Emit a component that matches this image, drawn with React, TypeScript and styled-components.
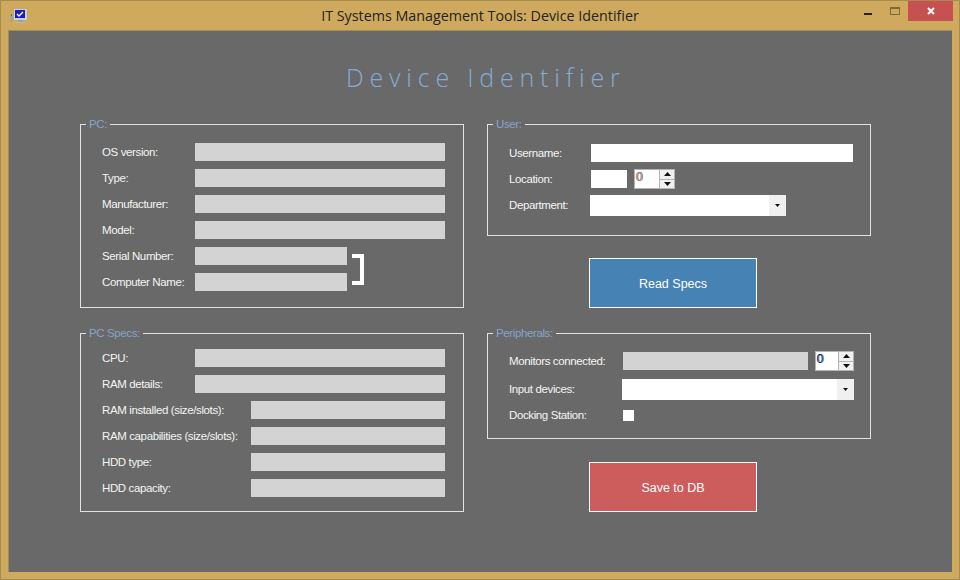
import React from "react";
import styled, { createGlobalStyle } from "styled-components";

const GlobalStyle = createGlobalStyle`
	html, body {
		margin: 0;
		padding: 0;
		background: #cfaa5e;
	}
	* {
		box-sizing: border-box;
	}
`;

const Window = styled.div`
	width: 960px;
	height: 580px;
	display: flex;
	flex-direction: column;
	overflow: hidden;
	border: 1px solid #a48c52;
	background: #cfaa5e;
	font-family: "Open Sans", "Liberation Sans", sans-serif;
`;

const TitleBar = styled.header`
	height: 29px;
	flex: none;
	display: grid;
	grid-template-columns: 1fr auto 1fr;
	align-items: start;
`;

const AppIcon = styled.svg`
	margin: 8px 0 0 9px;
	display: block;
`;

const WindowTitle = styled.div`
	padding-top: 5px;
	font-size: 14.3px;
	line-height: 20px;
	color: #222;
`;

const WindowButtons = styled.div`
	justify-self: end;
	display: flex;
	margin-right: 6px;
`;

const WindowButton = styled.div<{ $close?: boolean }>`
	width: ${p => (p.$close ? "45px" : "27px")};
	height: 20px;
	display: flex;
	align-items: center;
	justify-content: center;
	background: ${p => (p.$close ? "#c75050" : "transparent")};
`;

const MinimizeGlyph = styled.svg`
	align-self: flex-end;
	margin-bottom: 6px;
`;

const Content = styled.main`
	flex: 1;
	margin: 0 7px 7px;
	background: #696969;
	border: 1px solid #a48c52;
	border-width: 1px 0 0 1px;
	padding: 29px 80px 0 71px;
`;

const Heading = styled.h1`
	margin: 0 0 30px;
	padding-left: 266px;
	font-family: "Open Sans", "Liberation Sans", sans-serif;
	font-size: 25px;
	font-weight: 300;
	line-height: 34px;
	letter-spacing: 5.8px;
	color: #86a9d6;
`;

const Columns = styled.div`
	display: grid;
	grid-template-columns: 384px 384px;
	column-gap: 23px;
`;

const Column = styled.div`
	display: flex;
	flex-direction: column;
	align-items: flex-start;
`;

const Group = styled.section<{ $height: number; $top?: number; $below?: number }>`
	position: relative;
	width: 100%;
	height: ${p => p.$height}px;
	margin-bottom: ${p => p.$below ?? 0}px;
	padding: ${p => p.$top ?? 18}px 0 0 21px;
	border: 1px solid #e2e2e2;
	display: flex;
	flex-direction: column;
	gap: 8px;
`;

const Legend = styled.span`
	position: absolute;
	top: -8px;
	left: 5px;
	padding: 0 3px;
	background: #696969;
	font-family: "Liberation Sans", Arial, sans-serif;
	font-size: 11.5px;
	letter-spacing: -0.38px;
	line-height: 15px;
	color: #86a4cb;
`;

const Row = styled.div<{ $h?: number; $above?: number }>`
	display: flex;
	align-items: center;
	height: ${p => p.$h ?? 18}px;
	margin-top: ${p => p.$above ?? 0}px;
`;

const Label = styled.label<{ $w: number }>`
	width: ${p => p.$w}px;
	flex: none;
	font-family: "Liberation Sans", Arial, sans-serif;
	font-size: 11.5px;
	letter-spacing: -0.38px;
	line-height: 15px;
	color: #f4f4f4;
	white-space: nowrap;
`;

const Field = styled.div<{ $w: number; $white?: boolean }>`
	width: ${p => p.$w}px;
	height: 18px;
	flex: none;
	background: ${p => (p.$white ? "#fff" : "#d3d3d3")};
`;

const PairWrap = styled.div`
	display: flex;
	align-items: center;
`;

const PairRows = styled.div`
	display: flex;
	flex-direction: column;
	gap: 8px;
`;

const Bracket = styled.div`
	width: 12px;
	height: 31px;
	margin-left: 5px;
	border: solid #fff;
	border-width: 4px 4px 4px 0;
`;

const Spinner = styled.div<{ $w: number; $gap: number; $fringe: string }>`
	width: ${p => p.$w}px;
	height: 20px;
	margin-left: ${p => p.$gap}px;
	flex: none;
	display: flex;
	justify-content: space-between;
	background: #fff;
	border: 1px solid #b4b4b4;
	font-family: "Liberation Sans", Arial, sans-serif;
	font-size: 12px;
	line-height: 15px;
	padding-left: 1px;
	color: transparent;
	text-shadow: -0.4px 0 ${p => p.$fringe}, 0.4px 0 #1f6fd0;
`;

const SpinButtons = styled.div`
	width: 15px;
	flex: none;
	display: flex;
	flex-direction: column;
	gap: 1px;
	background: #b4b4b4;
	border-left: 1px solid #b4b4b4;
`;

const SpinButton = styled.div`
	flex: 1;
	display: flex;
	align-items: center;
	justify-content: center;
	background: #f0f0f0;
`;

const Combo = styled.div<{ $w: number }>`
	width: ${p => p.$w}px;
	height: 21px;
	flex: none;
	margin-left: -1px;
	display: flex;
	justify-content: flex-end;
	background: #fff;
`;

const ComboArrow = styled.div`
	width: 17px;
	display: flex;
	align-items: center;
	justify-content: center;
	background: #f0f0f0;
`;

const Check = styled.div`
	width: 11px;
	height: 11px;
	flex: none;
	background: #fff;
`;

const ActionButton = styled.button<{ $bg: string; $below?: number }>`
	width: 168px;
	height: 50px;
	flex: none;
	margin-left: 102px;
	margin-bottom: ${p => p.$below ?? 0}px;
	padding: 2px 0 0;
	border: 1px solid #fff;
	background: ${p => p.$bg};
	font-family: "Liberation Sans", Arial, sans-serif;
	font-size: 12.5px;
	color: #fff;
`;

function Arrow({ up, size = 7 }: { up?: boolean; size?: number }) {
	const h = Math.ceil(size / 2);
	return (
		<svg width={size} height={h} viewBox={`0 0 ${size} ${h}`}>
			<path d={up ? `M${size / 2} 0L${size} ${h}H0z` : `M0 0H${size}L${size / 2} ${h}z`} fill="#111" />
		</svg>
	);
}

function Spin({ w, gap, fringe }: { w: number; gap: number; fringe: string }) {
	return (
		<Spinner $w={w} $gap={gap} $fringe={fringe}>
			0
			<SpinButtons>
				<SpinButton><Arrow up /></SpinButton>
				<SpinButton><Arrow /></SpinButton>
			</SpinButtons>
		</Spinner>
	);
}

const pcRows = ["OS version:", "Type:", "Manufacturer:", "Model:"];
const specRows = ["CPU:", "RAM details:"];
const specRowsShort = ["RAM installed (size/slots):", "RAM capabilities (size/slots):", "HDD type:", "HDD capacity:"];

export default function App() {
	return (
		<Window>
			<GlobalStyle />
			<TitleBar>
				<AppIcon width="17" height="15" viewBox="0 0 17 15">
					<rect x="0.5" y="5" width="2" height="8" fill="#9aa39a" />
					<rect x="1" y="5" width="1" height="2" fill="#3d8a3d" />
					<rect x="4" y="0" width="13" height="11" fill="#c9d0d8" />
					<rect x="5" y="1" width="10" height="8" fill="#1c1cc4" />
					<path d="M7 5l2 2 4-4" stroke="#fff" strokeWidth="1.4" fill="none" />
					<rect x="8" y="11" width="5" height="2" fill="#9aa0a6" />
					<rect x="6" y="13" width="9" height="1" fill="#b6bcc2" />
				</AppIcon>
				<WindowTitle>IT Systems Management Tools: Device Identifier</WindowTitle>
				<WindowButtons>
					<WindowButton>
						<MinimizeGlyph width="8" height="2" viewBox="0 0 8 2"><rect width="8" height="2" fill="#222" /></MinimizeGlyph>
					</WindowButton>
					<WindowButton>
						<svg width="10" height="8" viewBox="0 0 10 8">
							<rect x="0.5" y="0.5" width="9" height="7" fill="none" stroke="#7d6a3a" />
							<rect width="10" height="2" fill="#7d6a3a" />
						</svg>
					</WindowButton>
					<WindowButton $close>
						<svg width="8" height="8" viewBox="0 0 8 8">
							<path d="M1 1l6 6M7 1L1 7" stroke="#fff" strokeWidth="2" />
						</svg>
					</WindowButton>
				</WindowButtons>
			</TitleBar>
			<Content>
				<Heading>Device Identifier</Heading>
				<Columns>
					<Column>
						<Group $height={184} $below={25}>
							<Legend>PC:</Legend>
							{pcRows.map(text => (
								<Row key={text}>
									<Label $w={93}>{text}</Label>
									<Field $w={250} />
								</Row>
							))}
							<PairWrap>
								<PairRows>
									<Row><Label $w={93}>Serial Number:</Label><Field $w={152} /></Row>
									<Row><Label $w={93}>Computer Name:</Label><Field $w={152} /></Row>
								</PairRows>
								<Bracket />
							</PairWrap>
						</Group>
						<Group $height={179} $top={15}>
							<Legend>PC Specs:</Legend>
							{specRows.map(text => (
								<Row key={text}>
									<Label $w={93}>{text}</Label>
									<Field $w={250} />
								</Row>
							))}
							{specRowsShort.map(text => (
								<Row key={text}>
									<Label $w={149}>{text}</Label>
									<Field $w={194} />
								</Row>
							))}
						</Group>
					</Column>
					<Column>
						<Group $height={112} $below={22} $top={19}>
							<Legend>User:</Legend>
							<Row>
								<Label $w={82}>Username:</Label>
								<Field $w={262} $white />
							</Row>
							<Row>
								<Label $w={82}>Location:</Label>
								<Field $w={36} $white />
								<Spin w={41} gap={7} fringe="#d8791a" />
							</Row>
							<Row $h={19}>
								<Label $w={82}>Department:</Label>
								<Combo $w={196}>
									<ComboArrow><Arrow size={5} /></ComboArrow>
								</Combo>
							</Row>
						</Group>
						<ActionButton $bg="#4682b4" $below={25}>Read Specs</ActionButton>
						<Group $height={106} $below={23}>
							<Legend>Peripherals:</Legend>
							<Row>
								<Label $w={114}>Monitors connected:</Label>
								<Field $w={185} />
								<Spin w={39} gap={7} fringe="#1c2a3a" />
							</Row>
							<Row $h={21} $above={1}>
								<Label $w={114}>Input devices:</Label>
								<Combo $w={232}>
									<ComboArrow><Arrow size={5} /></ComboArrow>
								</Combo>
							</Row>
							<Row $h={15}>
								<Label $w={114}>Docking Station:</Label>
								<Check />
							</Row>
						</Group>
						<ActionButton $bg="#cd5c5c">Save to DB</ActionButton>
					</Column>
				</Columns>
			</Content>
		</Window>
	);
}
